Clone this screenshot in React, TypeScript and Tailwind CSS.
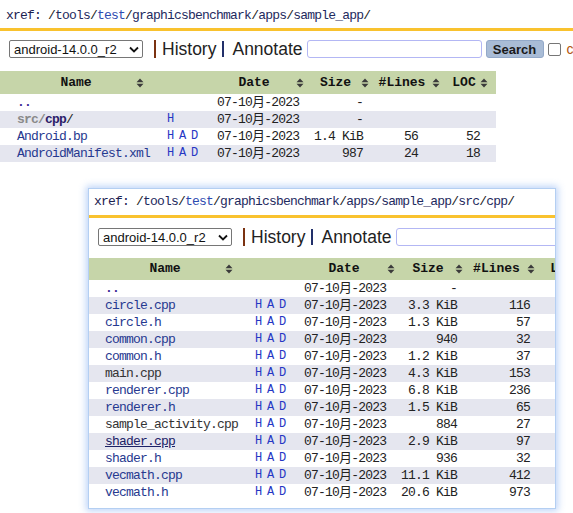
import type { ReactNode } from 'react';

type Row = {
    name: ReactNode;
    had: string;
    date: string;
    size: string;
    lines: string;
    loc: string;
};

type Pads = {
    cols: string;
    head: string;
    name: string;
    had: string;
    date: string;
    size: string;
    lines: string;
    loc: string;
};

const MONO = "font-['Liberation_Mono','Noto_Sans_CJK_SC',monospace] text-[13px] tracking-[-0.8px]";
const DATE = '07-10月-2023';

const SortIcon = () => (
    <svg width="8" height="10" viewBox="0 0 8 10" className="shrink-0">
        <path d="M4 0.5 L7.5 4.2 H0.5 Z M0.5 5.8 H7.5 L4 9.5 Z" fill="#3b3b3b" />
    </svg>
);

const Chevron = () => (
    <svg width="10" height="7" viewBox="0 0 10 7" className="shrink-0">
        <path d="M1 1.5 L5 5.5 L9 1.5" fill="none" stroke="#111" strokeWidth="1.8" />
    </svg>
);

const Link = ({ children, className = 'text-[#26398f]' }: { children: ReactNode; className?: string }) => (
    <span className={className}>{children}</span>
);

const Crumbs = ({ sub }: { sub?: boolean }) => (
    <span className={`${MONO} whitespace-nowrap text-[#222]`}>
        <span className="text-[#1c214f]">xref: </span>/<Link className="text-[#1e2a5e]">tools</Link>/
        <Link className="text-[#2d4bb0]">test</Link>/<Link className="text-[#1e2a5e]">graphicsbenchmark</Link>/
        <Link className="text-[#1e2a5e]">apps</Link>/<Link className="text-[#1e2a5e]">sample_app</Link>/
        {sub && (
            <>
                <Link className="text-[#1e2a5e]">src</Link>/<Link className="text-[#1e2a5e]">cpp</Link>/
            </>
        )}
    </span>
);

const Toolbar = ({ className }: { className: string }) => (
    <div
        className={`flex h-[18px] items-center whitespace-nowrap pl-[9px] font-['Liberation_Sans',Arial,sans-serif] leading-[18px] ${className}`}
    >
        <div className="flex h-[18px] w-[134px] shrink-0 items-center justify-between rounded-[2px] border border-[#767676] bg-white pl-[4px] pr-[3px] text-[13px] leading-none text-[#111]">
            <span>android-14.0.0_r2</span>
            <Chevron />
        </div>
        <span className="ml-[11px] h-[18px] w-[2px] shrink-0 bg-[#7b3211]" />
        <span className="ml-[6px] shrink-0 text-[17.5px] leading-[18px] text-[#222]">History</span>
        <span className="ml-[6px] h-[16px] w-[2px] shrink-0 bg-[#22306a]" />
        <span className="ml-[8px] shrink-0 text-[17.5px] leading-[18px] text-[#222]">Annotate</span>
        <div className="ml-[4px] h-[18px] w-[175px] shrink-0 rounded-[3px] border border-[#b3b7f4] bg-white" />
        <div className="ml-[4px] flex h-[18px] w-[58px] shrink-0 items-center justify-center rounded-[3px] border border-[#93a9c9] bg-[#a9bcd6] text-[13px] font-bold leading-none text-[#1a1a1a]">
            Search
        </div>
        <div className="ml-[4px] h-[13px] w-[13px] shrink-0 rounded-[2px] border border-[#767676] bg-white" />
        <span className="ml-[6px] shrink-0 text-[14px] leading-none text-[#b3530d]">current</span>
    </div>
);

const Th = ({ label, className }: { label?: string; className: string }) => (
    <div className={`flex items-center ${className}`}>
        <span className="flex-1 text-center">{label}</span>
        <SortIcon />
    </div>
);

const Listing = ({ rows, p }: { rows: Row[]; p: Pads }) => (
    <div className={`${MONO} w-max text-[#222]`}>
        <div className={`grid ${p.cols} ${p.head} items-center bg-[#c6d5a9] font-bold tracking-normal text-[#111]`}>
            <Th label="Name" className="pl-4 pr-[11px]" />
            <div />
            <Th label="Date" className="pr-[6px]" />
            <Th label="Size" className="pr-[3px]" />
            <Th label="#Lines" className="pr-[2px]" />
            <Th label="LOC" className="pl-[6px] pr-[8px]" />
        </div>
        {rows.map((r, i) => (
            <div
                key={i}
                className={`grid ${p.cols} h-[17px] items-center whitespace-nowrap leading-[17px] ${i % 2 === 1 ? 'bg-[#e5e6ef]' : 'bg-white'}`}
            >
                <div className={p.name}>{r.name}</div>
                <div className={`${p.had} text-[12px] tracking-[-1.2px] text-[#2436c4]`}>{r.had}</div>
                <div className={p.date}>{r.date}</div>
                <div className={`${p.size} text-right`}>{r.size}</div>
                <div className={`${p.lines} text-right`}>{r.lines}</div>
                <div className={`${p.loc} text-right`}>{r.loc}</div>
            </div>
        ))}
    </div>
);

const parent = <span className="font-bold text-[#3a2a96]">..</span>;

const topRows: Row[] = [
    { name: parent, had: '', date: DATE, size: '-', lines: '', loc: '' },
    {
        name: (
            <>
                <span className="font-bold text-[#8a8a8a]">src/</span>
                <span className="font-bold text-[#2c1f6a]">cpp</span>/
            </>
        ),
        had: 'H',
        date: DATE,
        size: '-',
        lines: '',
        loc: '',
    },
    { name: <Link>Android.bp</Link>, had: 'H A D', date: DATE, size: '1.4 KiB', lines: '56', loc: '52' },
    { name: <Link>AndroidManifest.xml</Link>, had: 'H A D', date: DATE, size: '987', lines: '24', loc: '18' },
];

const file = (name: string, size: string, lines: string, loc: string, cls?: string): Row => ({
    name: <Link className={cls}>{name}</Link>,
    had: 'H A D',
    date: DATE,
    size,
    lines,
    loc,
});

const popRows: Row[] = [
    { name: parent, had: '', date: DATE, size: '-', lines: '', loc: '' },
    file('circle.cpp', '3.3 KiB', '116', '88'),
    file('circle.h', '1.3 KiB', '57', '30'),
    file('common.cpp', '940', '32', '21'),
    file('common.h', '1.2 KiB', '37', '20'),
    file('main.cpp', '4.3 KiB', '153', '111', 'text-[#333]'),
    file('renderer.cpp', '6.8 KiB', '236', '171'),
    file('renderer.h', '1.5 KiB', '65', '41'),
    file('sample_activity.cpp', '884', '27', '18', 'text-[#333]'),
    file('shader.cpp', '2.9 KiB', '97', '72', 'text-[#1b2166] underline'),
    file('shader.h', '936', '32', '19'),
    file('vecmath.cpp', '11.1 KiB', '412', '315'),
    file('vecmath.h', '20.6 KiB', '973', '760'),
];

const topPads: Pads = {
    cols: 'grid-cols-[155px_57px_98px_62px_70px_54px]',
    head: 'h-[23px]',
    name: 'pl-[17px]',
    had: 'pl-[12px]',
    date: 'pl-[5px]',
    size: 'pr-[9px]',
    lines: 'pr-[24px]',
    loc: 'pr-[16px]',
};

const popPads: Pads = {
    cols: 'grid-cols-[155px_57px_100px_65px_71px_60px]',
    head: 'h-[22px]',
    name: 'pl-[16px]',
    had: 'pl-[11px]',
    date: 'pl-[3px]',
    size: 'pr-[9px]',
    lines: 'pr-[7px]',
    loc: 'pr-[20px]',
};

export default function App() {
    return (
        <div className="relative h-[513px] w-[573px] overflow-hidden bg-white">
            {/* parent directory page */}
            <div className="flex h-[28px] items-center pl-[6px] pt-[3px]">
                <Crumbs />
            </div>
            <div className="h-[3px] bg-[#f9c22e]" />
            <div className="pt-[9px]">
                <Toolbar className="" />
            </div>
            <div className="mt-[13px]">
                <Listing rows={topRows} p={topPads} />
            </div>

            {/* preview window of src/cpp */}
            <div className="absolute left-[88px] top-[188px] h-[321px] w-[468px] overflow-hidden border border-[#b4cff2] bg-white shadow-[0_0_7px_2px_rgba(110,160,240,0.45)]">
                <div className="flex h-[26px] items-center pl-[5px]">
                    <Crumbs sub />
                </div>
                <div className="h-[3px] bg-[#f9c22e]" />
                <div className="pt-[10px]">
                    <Toolbar className="" />
                </div>
                <div className="mt-[12px]">
                    <Listing rows={popRows} p={popPads} />
                </div>
            </div>
        </div>
    );
}
